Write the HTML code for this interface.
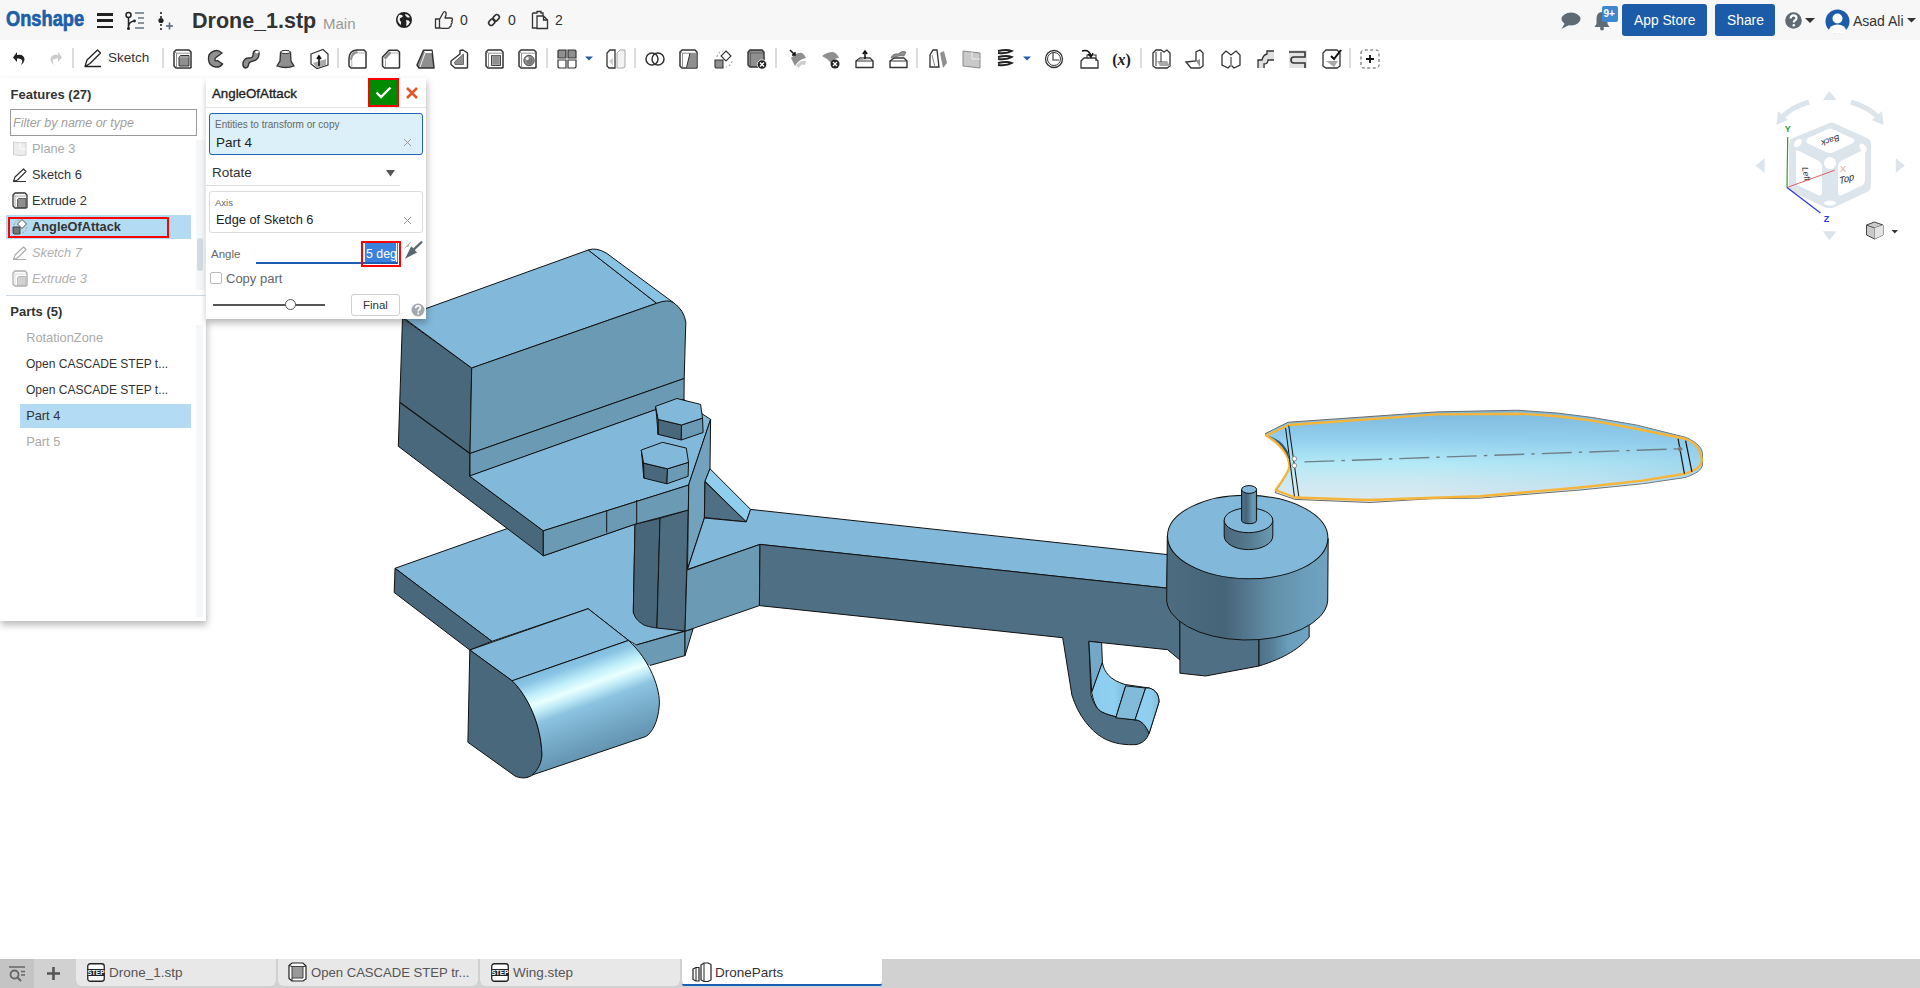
<!DOCTYPE html>
<html><head><meta charset="utf-8">
<style>
*{box-sizing:border-box;margin:0;padding:0}
html,body{width:1920px;height:988px;overflow:hidden;background:#fff;font-family:"Liberation Sans",sans-serif;color:#333}
.abs{position:absolute}
#top{position:absolute;left:0;top:0;width:1920px;height:40px;background:#f7f7f7}
#tb{position:absolute;left:0;top:40px;width:1920px;height:38px;background:#fff}
.t{position:absolute;white-space:nowrap;line-height:1}
.sep{position:absolute;top:48px;width:2px;height:20px;background:#dcdcdc}
#lp{position:absolute;left:0;top:78px;width:206px;height:543px;background:#fff;box-shadow:1px 4px 7px rgba(0,0,0,.28)}
#dlg{position:absolute;left:206px;top:78px;width:220px;height:241px;background:#fff;box-shadow:1px 4px 7px rgba(0,0,0,.28)}
#bot{position:absolute;left:0;top:959px;width:1920px;height:29px;background:#d1d1d1}
.tab{position:absolute;top:959px;height:27px;width:200px;background:#e8e8e8;border-radius:0 0 6px 6px}
.tabt{position:absolute;top:966px;font-size:13.5px;color:#555}
.fi{position:absolute;left:32px;font-size:12.8px;color:#333}
.pi{position:absolute;left:26px;font-size:12.8px;color:#333}
.gr{color:#aaa}
svg{overflow:visible}
</style></head><body>
<!-- 3D viewport -->
<svg id="model" class="abs" style="left:0;top:0" width="1920" height="988" viewBox="0 0 1920 988">
<defs>
<linearGradient id="gcyl" gradientUnits="userSpaceOnUse" x1="565" y1="655" x2="605" y2="765">
 <stop offset="0" stop-color="#78b3d7"/><stop offset="0.12" stop-color="#8bc5e5"/><stop offset="0.23" stop-color="#c2f0fb"/><stop offset="0.31" stop-color="#eaffff"/><stop offset="0.38" stop-color="#bfeaf7"/><stop offset="0.47" stop-color="#8cc3e0"/><stop offset="0.72" stop-color="#71a5c2"/><stop offset="1" stop-color="#5a88a4"/>
</linearGradient>
<linearGradient id="ghub" gradientUnits="userSpaceOnUse" x1="1166" y1="0" x2="1328" y2="0">
 <stop offset="0" stop-color="#4d6c80"/><stop offset="0.36" stop-color="#466478"/><stop offset="0.46" stop-color="#507288"/><stop offset="0.66" stop-color="#6390a9"/><stop offset="0.86" stop-color="#6a9eba"/><stop offset="1" stop-color="#70a3c0"/>
</linearGradient>
<linearGradient id="ghub2" gradientUnits="userSpaceOnUse" x1="1259" y1="0" x2="1309" y2="0">
 <stop offset="0" stop-color="#4f7187"/><stop offset="0.2" stop-color="#557b92"/><stop offset="0.6" stop-color="#6a9fbc"/><stop offset="1" stop-color="#6ea4c2"/>
</linearGradient>
<linearGradient id="gboss" gradientUnits="userSpaceOnUse" x1="1224" y1="0" x2="1273" y2="0">
 <stop offset="0" stop-color="#4a687b"/><stop offset="0.5" stop-color="#55798f"/><stop offset="1" stop-color="#6b9bb4"/>
</linearGradient>
<linearGradient id="gshaft" gradientUnits="userSpaceOnUse" x1="1241" y1="0" x2="1257" y2="0">
 <stop offset="0" stop-color="#4f7388"/><stop offset="0.35" stop-color="#466579"/><stop offset="0.75" stop-color="#6a9ab5"/><stop offset="1" stop-color="#5d8aa3"/>
</linearGradient>
<linearGradient id="ghook" gradientUnits="userSpaceOnUse" x1="1095" y1="0" x2="1127" y2="0">
 <stop offset="0" stop-color="#8ccdef"/><stop offset="0.6" stop-color="#8fcff0"/><stop offset="1" stop-color="#7db9da"/>
</linearGradient>
<linearGradient id="ghook2" gradientUnits="userSpaceOnUse" x1="1138" y1="0" x2="1160" y2="0">
 <stop offset="0" stop-color="#8fd0f1"/><stop offset="0.6" stop-color="#8ecdee"/><stop offset="1" stop-color="#7fbbdb"/>
</linearGradient>
<linearGradient id="gwing" gradientUnits="userSpaceOnUse" x1="0" y1="412" x2="0" y2="500">
 <stop offset="0" stop-color="#7fb8dc"/><stop offset="0.3" stop-color="#92cfee"/><stop offset="0.58" stop-color="#b3e9f6"/><stop offset="0.8" stop-color="#cde9f2"/><stop offset="1" stop-color="#dce8ee"/>
</linearGradient>
<linearGradient id="gwing2" gradientUnits="userSpaceOnUse" x1="1420" y1="0" x2="1700" y2="0">
 <stop offset="0" stop-color="#86c1e3" stop-opacity="0"/><stop offset="0.6" stop-color="#88c4e5" stop-opacity="0.2"/><stop offset="1" stop-color="#80bbe0" stop-opacity="0.4"/>
</linearGradient>
</defs>
<path d="M395,568.3 L520,524 L543.3,555.8 L635,524.2 L633.3,613.3 L685,630.8 L636.25,645 L628.5,640.4 L588.1,608.7 L491.9,641.3Z" fill="#82b9da" stroke="#111" stroke-width="1" stroke-linejoin="round"/>
<path d="M395,568.3 L491.9,641.3 L469.8,650 L394.2,592.5Z" fill="#4a687b" stroke="#111" stroke-width="1" stroke-linejoin="round"/>
<path d="M636.25,645 L685,631.25 L685,655.6 L650,665.4 L625,665 L625,642Z" fill="#6b9bb4" stroke="none"/>
<path d="M636.25,645 L685,631.25 L685,655.6 L650,665.4" fill="none" stroke="#111" stroke-width="1"/>
<path d="M685,631.25 L693.1,628.75 L685,655.6Z" fill="#6b9bb4" stroke="#111" stroke-width="1" stroke-linejoin="round"/>
<path d="M469.8,650 L588.1,608.7 L628.5,640.4 L512.1,680.8Z" fill="#82b9da" stroke="#111" stroke-width="1" stroke-linejoin="round"/>
<path d="M469.8,650 L512.1,680.8 C528,696 541,725 541.9,753.8 C542,768 534,777 524.6,777.9 C520,778 517,777 515,776 L467.9,742.3 Z" fill="#4a687b" stroke="#111" stroke-width="1" stroke-linejoin="round"/>
<path d="M512.1,680.8 L628.5,640.4 C650,660 661,690 659.2,706 C658,722 652,733 645.8,736.5 L532.3,775 C538,770 542,762 541.9,753.8 C541,725 528,696 512.1,680.8 Z" fill="url(#gcyl)" stroke="#111" stroke-width="1" stroke-linejoin="round"/>
<path d="M635,524.2 L660,518.3 L656.9,628 C650,627 646,626 644,625 C637,621 633.3,616 633.3,610 Z" fill="#48667a" stroke="#111" stroke-width="1" stroke-linejoin="round"/>
<path d="M660,518.3 L688.3,510 L685,631 L656.9,628Z" fill="#4d6c80" stroke="#111" stroke-width="1" stroke-linejoin="round"/>
<path d="M402.5,318 L471.7,368 L470,453.5 L469.5,476 L543.3,530.8 L543.3,555.8 L398.3,446.3Z" fill="#4a687b" stroke="#111" stroke-width="1" stroke-linejoin="round"/>
<path d="M400,402.5 L470,453.5" fill="none" stroke="#111" stroke-width="1.3"/>
<path d="M402.5,317 L588.3,250 L656.7,303.3 L471.7,368Z" fill="#82b9da" stroke="#111" stroke-width="1" stroke-linejoin="round"/>
<path d="M588.3,250 Q596,247 606.7,253.3 L673.3,302.5 L656.7,303.3 Z" fill="#89c3e3" stroke="#111" stroke-width="1" stroke-linejoin="round"/>
<path d="M471.7,368 L656.7,303.3 Q668,299 673.3,302.5 Q684,310 685.8,322 L684.2,378.5 L470,453.5 Z" fill="#6b9bb4" stroke="#111" stroke-width="1" stroke-linejoin="round"/>
<path d="M470,453.5 L684.2,378.5 L684,399.5 L470,476Z" fill="#6b9bb4" stroke="#111" stroke-width="1" stroke-linejoin="round"/>
<path d="M469.5,476 L684,399.5 L703,414.4 L710.6,419.4 L689.4,482.5 L688.75,485 L543.3,530.8Z" fill="#82b9da" stroke="#111" stroke-width="1" stroke-linejoin="round"/>
<path d="M543.3,530.8 L688.75,485 L688.3,510 L635,524.2 L543.3,555.8Z" fill="#6b9bb4" stroke="#111" stroke-width="1" stroke-linejoin="round"/>
<path d="M606.7,510 L606.7,532.5" fill="none" stroke="#111" stroke-width="1"/>
<path d="M636.7,500 L636.7,524" fill="none" stroke="#111" stroke-width="1"/>
<path d="M658.1,419.4 L681.5,425 L681.3,440 L658.1,434.4Z" fill="#4a687b" stroke="#111" stroke-width="1" stroke-linejoin="round"/>
<path d="M681.5,425 L702.5,418.1 L703.1,432.5 L681.3,440Z" fill="#6b9bb4" stroke="#111" stroke-width="1" stroke-linejoin="round"/>
<path d="M655.6,406.3 L658.1,419.4 L658.1,434.4 L656.6,416.3Z" fill="#6b9bb4" stroke="#111" stroke-width="1" stroke-linejoin="round"/>
<path d="M655.6,406.3 L676.9,398.5 L700.6,404.4 L702.5,418.1 L681.5,425 L658.1,419.4Z" fill="#82b9da" stroke="#111" stroke-width="1" stroke-linejoin="round"/>
<path d="M643.5,463.1 L667.5,468.8 L666.9,483.8 L643.8,478.1Z" fill="#4a687b" stroke="#111" stroke-width="1" stroke-linejoin="round"/>
<path d="M667.5,468.8 L688.5,462.3 L688.1,476.3 L666.9,483.8Z" fill="#6b9bb4" stroke="#111" stroke-width="1" stroke-linejoin="round"/>
<path d="M641.3,450 L643.5,463.1 L643.8,478.1 L642.3,460Z" fill="#6b9bb4" stroke="#111" stroke-width="1" stroke-linejoin="round"/>
<path d="M641.3,450 L662.5,442.3 L686.3,448.1 L688.5,462.3 L667.5,468.8 L643.5,463.1Z" fill="#82b9da" stroke="#111" stroke-width="1" stroke-linejoin="round"/>
<path d="M710.6,419.4 L710,468.75 L705,481.25 L704.4,518 L687.5,569 L688.75,485 L689.4,482.5Z" fill="#72a2bd" stroke="#111" stroke-width="1" stroke-linejoin="round"/>
<path d="M710,468.75 L750.6,509.4 L746.25,521.9 L705,481.25Z" fill="#90ceee" stroke="#111" stroke-width="1" stroke-linejoin="round"/>
<path d="M705,481.9 L746.25,521.9 L704.4,517.5Z" fill="#4e6f84" stroke="#111" stroke-width="1" stroke-linejoin="round"/>
<path d="M704.4,518 L746.25,521.9 L750.6,509.4 L1167.6,554.6 L1166.7,588.1 L760,544.4 L687.5,569.4Z" fill="#82b9da" stroke="#111" stroke-width="1" stroke-linejoin="round"/>
<path d="M686.9,570 L760,544.4 L759.4,605.6 L685,631.25Z" fill="#6b9bb4" stroke="#111" stroke-width="1" stroke-linejoin="round"/>
<path d="M759.4,605.6 L760,544.4 L1166.7,588.1 L1180,600 L1180,660 L1167.6,649.7 L1088.9,641.3 L1091,695.1 C1094,705 1098,710 1102,712 C1110,716 1125,719 1136.4,719.9 C1142,721 1146,726 1149.1,732 C1148,740 1140,745 1133.5,744.7 C1120,745 1110,742 1102.4,737.6 C1090,730 1078,715 1071.9,695.1 L1062.7,637.7 Z" fill="#4e6f84" stroke="#111" stroke-width="1" stroke-linejoin="round"/>
<path d="M1088.9,641.3 L1101.6,642.7 L1102.4,662.5 L1091.7,692.3Z" fill="#73a8c8" stroke="#111" stroke-width="1" stroke-linejoin="round"/>
<path d="M1102.4,662.5 C1104,672 1110,680 1125,684.5 L1149.1,688 C1156,690 1159,695 1159,702 L1149.1,733.4 C1146,726 1142,721 1136.4,719.9 C1125,719 1110,716 1102,712 C1098,710 1094,705 1091.7,692.3 Z" fill="url(#ghook)" stroke="#111" stroke-width="1" stroke-linejoin="round"/>
<path d="M1125.7,685.9 L1115.8,717.8" fill="none" stroke="#111" stroke-width="1"/>
<path d="M1145.6,688 L1135,719.9" fill="none" stroke="#111" stroke-width="1"/>
<path d="M1125.7,685.9 L1145.6,688 L1135,719.9 L1115.8,717.8 Z" fill="#82bad9" stroke="#111" stroke-width="1" stroke-linejoin="round"/>
<path d="M1145.6,688 L1149.1,688 C1156,690 1159,695 1159,702 L1149.1,733.4 C1146,726 1142,721 1136.4,719.9 L1135,719.9 Z" fill="url(#ghook2)" stroke="#111" stroke-width="1" stroke-linejoin="round"/>
<path d="M1179.9,600 L1179.9,673.2 L1205.7,676 L1259,666 L1259,600 Z" fill="#4e6f84" stroke="#111" stroke-width="1" stroke-linejoin="round"/>
<path d="M1259,600 L1259,666 C1285,658 1300,648 1309.2,637 L1309,600 Z" fill="url(#ghub2)" stroke="#111" stroke-width="1" stroke-linejoin="round"/>
<path d="M1167.3,536 L1166.7,597 A80.5,41 0 0 0 1327.7,601 L1328.2,538.5 Z" fill="url(#ghub)" stroke="#111" stroke-width="1" stroke-linejoin="round"/>
<ellipse cx="1247.7" cy="537" rx="80.2" ry="41.7" transform="rotate(0.9 1247.7 537)" fill="#82b9da" stroke="#111" stroke-width="1" stroke-linejoin="round"/>
<path d="M1224.2,520.3 L1224.2,536 A24.3,13.6 0 0 0 1272.8,536 L1272.8,520.3 Z" fill="url(#gboss)" stroke="#111" stroke-width="1" stroke-linejoin="round"/>
<ellipse cx="1248.5" cy="520.3" rx="24.3" ry="12.35" fill="#82b9da" stroke="#111" stroke-width="1" stroke-linejoin="round"/>
<path d="M1241.6,489.5 L1241.6,520.5 A7.5,3.2 0 0 0 1256.6,520.5 L1256.6,489.5 Z" fill="url(#gshaft)" stroke="#111" stroke-width="1" stroke-linejoin="round"/>
<ellipse cx="1249.1" cy="489.5" rx="7.5" ry="3.9" fill="#82b9da" stroke="#111" stroke-width="1" stroke-linejoin="round"/>
<path d="M1265,433.75 L1288.1,422.25 L1436.25,411.9 L1517.5,410.25 L1557.5,413.1 L1592.5,417.5 L1636.25,425 L1686.25,437.5 C1698,443 1702.5,448 1702.5,455 L1702.5,465 C1701,470 1698,473 1685,477.5 L1642.5,483.75 L1580,490 L1480,498.1 L1430,498.75 L1370,502.5 L1295,499.4 L1275,492.5 C1282,482 1289,472 1289.4,466 C1289,455 1282,444 1265,433.75 Z" fill="url(#gwing)" stroke="#6a6a6a" stroke-width="1" stroke-linejoin="round"/>
<path d="M1265,433.75 L1288.1,422.25 L1436.25,411.9 L1517.5,410.25 L1557.5,413.1 L1592.5,417.5 L1636.25,425 L1686.25,437.5 C1698,443 1702.5,448 1702.5,455 L1702.5,465 C1701,470 1698,473 1685,477.5 L1642.5,483.75 L1580,490 L1480,498.1 L1430,498.75 L1370,502.5 L1295,499.4 L1275,492.5 C1282,482 1289,472 1289.4,466 C1289,455 1282,444 1265,433.75 Z" fill="url(#gwing2)" stroke="none"/>
<path d="M1266,435.6 L1288.75,425 L1436,414.4 L1521,413.75 L1557.5,416.25 L1592.5,420.6 L1636,428.75 L1685,438.75 C1695,442 1700,448 1701.9,460 C1701,466 1699,469 1685,473.75 L1642.5,480.6 L1580,487.5 L1480,496.25 L1367.5,500 L1295,497.5 L1275.6,490 C1282,481 1289,472 1289.4,466.25 C1289,456 1283,446 1266,435.6 Z" fill="none" stroke="#f7b538" stroke-width="2.3" stroke-linejoin="round"/>
<path d="M1285.6,428.1 L1294.4,496.25" fill="none" stroke="#111" stroke-width="1"/>
<path d="M1288.75,425.6 L1298.75,496.25" fill="none" stroke="#111" stroke-width="1"/>
<path d="M1678.1,438.75 L1684.4,473.75" fill="none" stroke="#111" stroke-width="1.2"/>
<path d="M1685.6,440.6 L1691.9,471.9" fill="none" stroke="#111" stroke-width="1.2"/>
<path d="M1269,436 C1278,440 1286,450 1290,462 L1288,452 C1284,444 1278,439 1269,436Z" fill="#3a5566" stroke="none"/>
<path d="M1304.4,461.9 L1680,448.75" stroke="#6e7f88" stroke-width="1.4" stroke-dasharray="30 7 3.5 7" fill="none"/>
<circle cx="1294.4" cy="458.75" r="2.3" fill="#fff" stroke="#777" stroke-width="0.8"/>
<circle cx="1294.4" cy="465.6" r="2.3" fill="#fff" stroke="#777" stroke-width="0.8"/>
<path d="M1680,446 L1683,449 L1680,452 L1677,449Z" fill="#777"/>
</svg>

<div id="top">
  <div class="t" style="left:6px;top:8px;font-size:22px;font-weight:bold;color:#1d5fa8;-webkit-text-stroke:0.7px #1d5fa8;transform:scaleX(.83);transform-origin:0 0">Onshape</div>
  <!-- hamburger -->
  <div class="abs" style="left:97px;top:13px;width:16px;height:2.6px;background:#222"></div>
  <div class="abs" style="left:97px;top:19.4px;width:16px;height:2.6px;background:#222"></div>
  <div class="abs" style="left:97px;top:25.8px;width:16px;height:2.6px;background:#222"></div>
  <!-- branch icon -->
  <svg class="abs" style="left:124px;top:11px" width="22" height="20" viewBox="0 0 22 20">
    <circle cx="4.5" cy="4" r="2.5" fill="none" stroke="#222" stroke-width="1.5"/>
    <line x1="4.5" y1="6.5" x2="4.5" y2="18" stroke="#222" stroke-width="1.5"/>
    <circle cx="4.5" cy="17.5" r="1.5" fill="#222"/>
    <path d="M4.5 15 Q5 11 10 10" fill="none" stroke="#222" stroke-width="1.5"/>
    <circle cx="10.5" cy="10" r="1.4" fill="#222"/>
    <line x1="11" y1="2" x2="20" y2="2" stroke="#5a6a78" stroke-width="1.4"/>
    <line x1="14" y1="7" x2="20" y2="7" stroke="#5a6a78" stroke-width="1.4"/>
    <line x1="14" y1="12" x2="20" y2="12" stroke="#5a6a78" stroke-width="1.4"/>
    <line x1="11" y1="17" x2="20" y2="17" stroke="#5a6a78" stroke-width="1.4"/>
  </svg>
  <!-- insert icon -->
  <svg class="abs" style="left:156px;top:11px" width="20" height="20" viewBox="0 0 20 20">
    <line x1="5" y1="1" x2="5" y2="19" stroke="#222" stroke-width="1.6" stroke-dasharray="2 2"/>
    <circle cx="5" cy="9.5" r="2.6" fill="#222"/>
    <line x1="10" y1="15" x2="17" y2="15" stroke="#5a6a78" stroke-width="1.6"/>
    <line x1="13.5" y1="11.5" x2="13.5" y2="18.5" stroke="#5a6a78" stroke-width="1.6"/>
  </svg>
  <div class="t" style="left:192px;top:11px;font-size:21.5px;font-weight:bold;color:#333">Drone_1.stp</div>
  <div class="t" style="left:323px;top:16px;font-size:15px;color:#999">Main</div>
  <!-- globe -->
  <svg class="abs" style="left:395px;top:11px" width="18" height="18" viewBox="0 0 18 18">
    <circle cx="9" cy="9" r="8" fill="#222"/>
    <path d="M4 4 Q6 3 8 5 Q7 7 5 7 Q4 9 6 11 L6 14 Q3 12 2.5 9 Q2.5 6 4 4Z M10 3 Q13 3 15 6 Q13 7 12 6 Q10 5 10 3Z M11 9 Q14 9 15 11 Q14 14 11 15 Q12 12 11 9Z" fill="#f5f5f5"/>
  </svg>
  <!-- thumb -->
  <svg class="abs" style="left:434px;top:10px" width="20" height="20" viewBox="0 0 20 20">
    <path d="M1.5 9 H5.5 V18 H1.5Z M5.5 9.5 L9 3 Q10 1 11.5 2 Q12.5 3 12 5 L11 8 H17 Q18.5 8 18.5 9.5 Q18.5 10.5 17.5 11 Q18.5 11.5 18 13 Q17.5 13.8 17 14 Q17.5 15 17 16 Q16.5 17 15.5 17 Q15.5 18.3 14 18.3 H8 Q6.5 18.3 5.5 17.5" fill="none" stroke="#333" stroke-width="1.3" stroke-linejoin="round"/>
  </svg>
  <div class="t" style="left:460px;top:13px;font-size:14px;color:#333">0</div>
  <!-- link -->
  <svg class="abs" style="left:486px;top:12px" width="16" height="16" viewBox="0 0 16 16">
    <g transform="rotate(-45 8 8)" fill="none" stroke="#333" stroke-width="1.6">
      <rect x="1.5" y="5.5" width="7" height="5" rx="2.5"/>
      <rect x="7.5" y="5.5" width="7" height="5" rx="2.5"/>
    </g>
  </svg>
  <div class="t" style="left:508px;top:13px;font-size:14px;color:#333">0</div>
  <!-- docs -->
  <svg class="abs" style="left:531px;top:10px" width="18" height="20" viewBox="0 0 18 20">
    <path d="M1.5 3 H6 V1.5 H10 V3 H12 V6 M1.5 3 V18 H6" fill="none" stroke="#333" stroke-width="1.3"/>
    <path d="M6 6 H12.5 L16.5 10 V18.5 H6Z M12.5 6 V10 H16.5" fill="none" stroke="#333" stroke-width="1.3"/>
  </svg>
  <div class="t" style="left:555px;top:13px;font-size:14px;color:#333">2</div>

  <!-- right -->
  <svg class="abs" style="left:1560px;top:11px" width="22" height="20" viewBox="0 0 22 20">
    <ellipse cx="11" cy="8" rx="9.5" ry="6.5" fill="#5f6b74"/>
    <path d="M5 12 L1.5 18 L10 13.5Z" fill="#5f6b74"/>
  </svg>
  <svg class="abs" style="left:1593px;top:11px" width="18" height="20" viewBox="0 0 18 20">
    <path d="M9 1 Q14.5 1 14.5 8 V13 L16.5 16 H1.5 L3.5 13 V8 Q3.5 1 9 1Z" fill="#5f6b74"/>
    <circle cx="9" cy="17.5" r="2" fill="#5f6b74"/>
  </svg>
  <div class="abs" style="left:1602px;top:6px;width:16px;height:16px;background:#3f88cf;border-radius:2px"></div>
  <div class="t" style="left:1603.5px;top:9px;font-size:10px;font-weight:bold;color:#fff">9+</div>
  <div class="abs" style="left:1622px;top:4px;width:85px;height:31.5px;background:#1c5ba8;border-radius:3px"></div>
  <div class="t" style="left:1634px;top:13.5px;font-size:13.8px;color:#fff">App Store</div>
  <div class="abs" style="left:1715px;top:4px;width:60px;height:31.5px;background:#1c5ba8;border-radius:3px"></div>
  <div class="t" style="left:1727px;top:13.5px;font-size:13.8px;color:#fff">Share</div>
  <svg class="abs" style="left:1785px;top:12px" width="17" height="17" viewBox="0 0 17 17">
    <circle cx="8.5" cy="8.5" r="8.3" fill="#5f6b74"/>
    <path d="M5.6 6.4 Q5.6 3.4 8.6 3.4 Q11.5 3.4 11.5 6 Q11.5 7.6 9.8 8.5 Q8.8 9.1 8.8 10.5" fill="none" stroke="#fff" stroke-width="2.1"/>
    <circle cx="8.8" cy="13.3" r="1.3" fill="#fff"/>
  </svg>
  <svg class="abs" style="left:1805px;top:18px" width="10" height="6" viewBox="0 0 10 6"><path d="M0 0H10L5 5Z" fill="#333"/></svg>
  <svg class="abs" style="left:1825px;top:9px" width="25" height="25" viewBox="0 0 25 25">
    <circle cx="12.5" cy="12.5" r="12" fill="#1c5ba8"/>
    <circle cx="12.5" cy="9.5" r="5" fill="#fff"/>
    <path d="M3.5 22 Q5 15.5 12.5 15.5 Q20 15.5 21.5 22 Q17.5 25 12.5 25 Q7.5 25 3.5 22Z" fill="#fff"/>
  </svg>
  <div class="t" style="left:1853px;top:14px;font-size:14px;color:#333">Asad Ali</div>
  <svg class="abs" style="left:1907px;top:18px" width="9" height="6" viewBox="0 0 9 6"><path d="M0 0H9L4.5 4.5Z" fill="#333"/></svg>
</div>

<div id="tb"></div>
<!-- toolbar -->
<svg class="abs" style="left:0;top:40px" width="1920" height="38" viewBox="0 40 1920 38" id="toolbar">
  <defs>
    <g id="box"><path d="M0.8 3 L3 0.8 H16 L18.2 3 V17 L16 19.2 H3 L0.8 17Z" fill="#fff" stroke="#333" stroke-width="1.3"/></g>
  </defs>
  <!-- undo -->
  <path d="M21 65 Q27 60 23 56 Q21 54 17 55 V52 L13 57.5 L17 62 V58.5 Q21 58 22 60 Q23 62 21 65Z" fill="#222"/>
  <path d="M54 65 Q48 60 52 56 Q54 54 58 55 V52 L62 57.5 L58 62 V58.5 Q54 58 53 60 Q52 62 54 65Z" fill="#ccc"/>
  <rect x="72" y="48" width="2" height="20" fill="#dcdcdc"/>
  <!-- pencil -->
  <path d="M85 66.5 L87 60 L97.5 50 L100.5 53 L90 63.5 Z M85 66.5 H101" fill="none" stroke="#222" stroke-width="1.3" stroke-linejoin="round"/>
  <!-- ICONS -->
<g transform="translate(173 49)"><path d="M1 3 L3 1 H16 L18 3 V18.5 L17 19 H3 L1 17Z" fill="#fff" stroke="#333" stroke-width="1.5" stroke-linejoin="round"/><path d="M1.5 3 L3.5 4.2 H17.5 M3.5 4.2 V18.5" fill="none" stroke="#777" stroke-width="0.8"/><path d="M6 8 L7.5 6.5 H16 V17 H6Z" fill="#8f8f8f" stroke="#333" stroke-width="1"/><path d="M6 8 H16" stroke="#bbb" stroke-width="0.8"/></g>
<g transform="translate(207 49)"><path d="M15 4 Q11 0.5 7 2 Q1 4 1.5 10.5 Q2 17 8.5 18 Q13 18.5 15.5 15 L10.5 11.5 Q9 12.5 8 11 Q7.5 9.5 9 8.5 L15 4Z" fill="#8f8f8f" stroke="#333" stroke-width="1.4"/></g>
<g transform="translate(241 49)"><path d="M2 14 Q3 9 8 9 Q12 9 12 6 Q12 2 15 1.5 Q18.5 1.5 18 5.5 Q17.5 11 12 12 Q7.5 13 7.5 16 Q7 19 4.5 19 Q1.5 18.5 2 14Z" fill="#8f8f8f" stroke="#333" stroke-width="1.4"/><ellipse cx="16" cy="3" rx="1.8" ry="1.2" fill="#fff"/></g>
<g transform="translate(276 49)"><path d="M4.5 3.5 Q9.5 0 14.5 3.5 L15 12 L18 17 Q10 20 1 17 L4 12Z" fill="#8f8f8f" stroke="#333" stroke-width="1.3"/><ellipse cx="9.5" cy="3" rx="4.8" ry="1.6" fill="#fff" stroke="#333" stroke-width="1"/></g>
<g transform="translate(310 49)"><path d="M1 5 L13 0.5 L18 5 V16 L7 19.5 L1 15Z" fill="#fff" stroke="#333" stroke-width="1.2"/><path d="M3 14 L16 10 V16 L7 19Z" fill="#aaa"/><path d="M9 17 V8 M7 10 L9 7 L11 10" stroke="#111" stroke-width="1.6" fill="none"/></g>
<g transform="translate(348 49)"><path d="M1 17 V10 Q1 1.5 9 1 H16 L18 3 V18.5 L17 19 H3 L1 17Z" fill="#fff" stroke="#333" stroke-width="1.5" stroke-linejoin="round"/><path d="M2 10.5 Q2.5 2.5 9 2 L10.5 4 Q4.5 4.5 3.8 11.5Z" fill="#8f8f8f"/><path d="M3.8 11.5 V18.5 M10.5 4 H17.5" stroke="#999" stroke-width="0.8" fill="none"/></g>
<g transform="translate(381.5 49)"><path d="M1 8 L7.5 1.2 H16 L18 3 V18.5 L17 19 H3 L1 17Z" fill="#fff" stroke="#333" stroke-width="1.5" stroke-linejoin="round"/><path d="M2 8.5 L8 2.2 L10.2 4 L4 10.5Z" fill="#8f8f8f"/><path d="M4 10.5 V18.5 M10.2 4 H17.5" stroke="#999" stroke-width="0.8" fill="none"/></g>
<g transform="translate(416 49)"><path d="M1 16 L7.5 1.2 H16 L18 19 H3 Z" fill="#8f8f8f" stroke="#333" stroke-width="1.5" stroke-linejoin="round"/><path d="M8 2 H15.5 L15.8 4 H9Z" fill="#fff"/><path d="M4 18 L9 4" stroke="#fff" stroke-width="0.9"/></g>
<g transform="translate(450 49)"><path d="M1 12 L10 5 V1.5 L13 1 L17.5 4 V18.5 L17 19 H5 L1 15.5Z" fill="#fff" stroke="#333" stroke-width="1.4" stroke-linejoin="round"/><path d="M4.5 13 L13.5 5 V15.5 H5Z" fill="#8f8f8f" stroke="#555" stroke-width="0.8"/></g>
<g transform="translate(485 49)"><path d="M1 3 L3 1 H16 L18 3 V18.5 L17 19 H3 L1 17Z" fill="#fff" stroke="#333" stroke-width="1.5" stroke-linejoin="round"/><path d="M1.5 3 L3.5 4.2 H17.5 M3.5 4.2 V18.5" fill="none" stroke="#777" stroke-width="0.8"/><path d="M6.5 6.5 H15.5 V16.5 H6.5Z" fill="#bbb" stroke="#333" stroke-width="0.9"/><path d="M7.5 6.5 V15.5 H14.5 V6.5Z" fill="#8f8f8f"/></g>
<g transform="translate(518 49)"><path d="M1 3 L3 1 H16 L18 3 V18.5 L17 19 H3 L1 17Z" fill="#fff" stroke="#333" stroke-width="1.5" stroke-linejoin="round"/><path d="M1.5 3 L3.5 4.2 H17.5 M3.5 4.2 V18.5" fill="none" stroke="#777" stroke-width="0.8"/><circle cx="11" cy="11.5" r="5.2" fill="#8f8f8f" stroke="#444" stroke-width="0.9"/><circle cx="11.5" cy="12" r="3" fill="#777"/><circle cx="9.3" cy="9.6" r="1.6" fill="#eee"/></g>
<g transform="translate(557 49)"><path d="M1 2 L2 1 H9 V9 H1Z M11 1 H18 L19 2 V9 H11Z" fill="#8f8f8f" stroke="#333" stroke-width="1.2"/><path d="M1 11 H9 V19 H2 L1 18Z M11 11 H19 V18 L18 19 H11Z" fill="#fff" stroke="#333" stroke-width="1.2"/></g>
<g transform="translate(606 49)"><path d="M1 4 L4 1 H9 V19 H3 L1 17Z" fill="#fff" stroke="#333" stroke-width="1.3"/><path d="M11 4 L14 1 H19 V18 L17 19 H11Z" fill="#f2f2f2" stroke="#aaa" stroke-width="1"/><path d="M3 12 L7 9 V17Z" fill="#ccc"/></g>
<g transform="translate(645 49)"><circle cx="7" cy="10" r="6" fill="none" stroke="#333" stroke-width="1.5"/><circle cx="13" cy="10" r="6" fill="none" stroke="#333" stroke-width="1.5"/></g>
<g transform="translate(679 49)"><path d="M1 3 L3 1 H16 L18 3 V18.5 L17 19 H3 L1 17Z" fill="#fff" stroke="#333" stroke-width="1.5" stroke-linejoin="round"/><path d="M1.5 3 L3.5 4.2 H17.5 M3.5 4.2 V18.5" fill="none" stroke="#777" stroke-width="0.8"/><path d="M11 4.2 H17.5 V18.5 H7.5Z" fill="#8f8f8f"/><path d="M11 4.2 L7.5 18.5" stroke="#333" stroke-width="1"/></g>
<g transform="translate(714 49)"><path d="M1 11 H9 V19 H2 L1 18Z" fill="#8f8f8f" stroke="#333" stroke-width="1.1"/><path d="M12 2 L17 7 L12 12 L7 7Z" fill="#fff" stroke="#333" stroke-width="1.1"/><path d="M3 8 Q4 3 9 2 M18 12 Q17 17 12 18" fill="none" stroke="#aaa" stroke-width="1.2" stroke-dasharray="2 2"/></g>
<g transform="translate(747 49)"><path d="M1 3 L3 1 H15 L17 3 V17 L15 18 H3 L1 16Z" fill="#8f8f8f" stroke="#333" stroke-width="1.4"/><path d="M1.5 3 L3.5 4 H16.5 M3.5 4 V17.5" stroke="#555" stroke-width="0.8" fill="none"/><circle cx="15" cy="15.5" r="4.7" fill="#222" stroke="#fff" stroke-width="0.8"/><path d="M13 13.5 L17 17.5 M17 13.5 L13 17.5" stroke="#fff" stroke-width="1.4"/></g>
<g transform="translate(787 49)"><path d="M4 9 Q10 3 15 4 Q18 6 19 9 Q12 10 8 17Z" fill="#8f8f8f"/><path d="M9 17 Q13 11 19 12 L18 16 Q14 14 12 19Z" fill="#ccc"/><path d="M3 1 L8 6 M8 3 V6 H5" stroke="#111" stroke-width="1.5" fill="none"/></g>
<g transform="translate(821 49)"><path d="M1 7 Q6 3 12 3 Q16 4 18 9 Q13 9 10 14 Q6 9 1 7Z" fill="#8f8f8f"/><circle cx="14" cy="15" r="4.5" fill="#222"/><path d="M12 13 L16 17 M16 13 L12 17" stroke="#fff" stroke-width="1.3"/></g>
<g transform="translate(855 49)"><path d="M1 12 L5 9 H15 L18 12 V18.5 H1Z" fill="#fff" stroke="#333" stroke-width="1.4" stroke-linejoin="round"/><path d="M1 12 H18" stroke="#333" stroke-width="1"/><path d="M3 11 Q6 7 10 9 L16 10Z" fill="#8f8f8f"/><path d="M10 10 V2.5 M7.8 5 L10 2 L12.2 5" stroke="#111" stroke-width="1.5" fill="none"/></g>
<g transform="translate(889 49)"><path d="M1 12 L5 9 H15 L18 12 V18.5 H1Z" fill="#fff" stroke="#333" stroke-width="1.4" stroke-linejoin="round"/><path d="M1 12 H18" stroke="#333" stroke-width="1"/><path d="M2 9 Q4 4 9 5 Q13 1 17 3 L15 7 Q11 6 7 8Z" fill="#8f8f8f" stroke="#555" stroke-width="0.6"/></g>
<g transform="translate(928 49)"><path d="M2 18 V6 L5 1 H9 L11 18Z" fill="#fff" stroke="#333" stroke-width="1.3"/><path d="M4 6 L7 18" stroke="#888" fill="none"/><path d="M12 4 L16 2 L19 14 L15 19Z" fill="#8f8f8f"/></g>
<g transform="translate(962 49)"><path d="M1 2 L18 4 V19 L1 17Z" fill="#c9c9c9" stroke="#888" stroke-width="1"/><path d="M10 3 V10 H18" stroke="#eee" fill="none"/></g>
<g transform="translate(995 49)"><path d="M3 2 Q12 0 17 2 Q12 5 3 4 M3 8 Q12 6 17 8 Q12 11 3 10 M3 14 Q12 12 17 14 Q12 17 3 16" stroke="#222" stroke-width="1.8" fill="none"/></g>
<g transform="translate(1044 49)"><circle cx="10" cy="10" r="8.5" fill="none" stroke="#333" stroke-width="1.3"/><circle cx="10" cy="10" r="6.5" fill="none" stroke="#333" stroke-width="1"/><path d="M9 4 V11 H15" stroke="#333" stroke-width="1.1" fill="none"/></g>
<g transform="translate(1080 49)"><path d="M1 12 L4 9 H15 L18 12 V19 H1Z" fill="#fff" stroke="#333" stroke-width="1.3"/><path d="M7 9 V6 H16 V12" fill="none" stroke="#333" stroke-width="1.1"/><path d="M2 2 Q9 0 11 7 M8 5 L11 8 L13 4" stroke="#111" stroke-width="1.4" fill="none"/></g>
<g transform="translate(1111 49)"><text x="10.5" y="15.5" font-size="16" font-family="Liberation Serif" fill="#222" text-anchor="middle" style="font-weight:bold">(<tspan style="font-style:italic">x</tspan>)</text></g>
<g transform="translate(1152 49)"><path d="M1 4 L4 1 H9 L12 3 L15 1 L18 4 V17 L15 19 H4 L1 17Z" fill="#fff" stroke="#333" stroke-width="1.3"/><path d="M5 12 H15 L18 17 H8Z" fill="#aaa"/><path d="M4 3 V17 M9 3 V13" stroke="#333" stroke-width="1"/></g>
<g transform="translate(1185 49)"><path d="M1 13 L11 12 V3 L15 1 L18 4 V17 L15 19 L6 19Z" fill="#fff" stroke="#333" stroke-width="1.3"/><path d="M11 12 L15 10 V18Z" fill="#8f8f8f"/></g>
<g transform="translate(1221 49)"><path d="M1 6 L5 2 L10 6 L15 2 L19 6 V16 L13 19 L10 16 L7 19 L1 16Z" fill="#fff" stroke="#333" stroke-width="1.3"/><path d="M9 8 L11 8 V18 L9 18Z" fill="#8f8f8f"/></g>
<g transform="translate(1255 49)"><path d="M3 10 H7 Q8 6 11 6 V2 H19 V11 H13 Q13 14 10 15 V19 H3" fill="#e0e0e0"/><path d="M3 19 V11 H7 Q8 6 12 5 V2 H19 M19 11 H13 Q13 15 9 15 V19" fill="none" stroke="#333" stroke-width="1.3"/></g>
<g transform="translate(1288 49)"><rect x="1" y="1" width="18" height="18" fill="#e3e3e3"/><path d="M1 3 H17 V8 H6 Q3 8 3 11 Q3 14 6 14 H17 V19" fill="none" stroke="#333" stroke-width="1.6"/></g>
<g transform="translate(1322 49)"><path d="M1 4 L4 1 H15 L18 4 V17 L15 19 H4 L1 17Z" fill="#fff" stroke="#333" stroke-width="1.3"/><path d="M4 12 L12 18 L16 12Z" fill="#aaa"/><path d="M9 7 L12 10 L19 1" stroke="#111" stroke-width="2" fill="none"/></g>
<g transform="translate(1360 49)"><path d="M1 4 Q1 1 4 1 H16 Q19 1 19 4 V16 Q19 19 16 19 H4 Q1 19 1 16Z" fill="none" stroke="#555" stroke-width="1" stroke-dasharray="3 2.5"/><path d="M10 6 V14 M6 10 H14" stroke="#111" stroke-width="1.8"/></g>
<path d="M585 56.5 H593 L589 60.5Z" fill="#1d5eb0"/>
<path d="M1023 56.5 H1031 L1027 60.5Z" fill="#1d5eb0"/>
<!-- /ICONS -->
<rect x="162" y="48" width="2" height="20" fill="#dcdcdc"/>
  <rect x="337" y="48" width="2" height="20" fill="#dcdcdc"/>
  <rect x="546" y="48" width="2" height="20" fill="#dcdcdc"/>
  <rect x="634" y="48" width="2" height="20" fill="#dcdcdc"/>
  <rect x="775" y="48" width="2" height="20" fill="#dcdcdc"/>
  <rect x="916" y="48" width="2" height="20" fill="#dcdcdc"/>
  <rect x="1140" y="48" width="2" height="20" fill="#dcdcdc"/>
  <rect x="1349" y="48" width="2" height="20" fill="#dcdcdc"/>
</svg>
<div class="t" style="left:108px;top:51px;font-size:13.5px;color:#333">Sketch</div>

<svg class="abs" style="left:1740px;top:80px" width="180" height="180" viewBox="0 0 180 180">
<g fill="#dde5ec">
<path d="M89.3 10.9 L82.9 20 H96.6Z"/>
<path d="M89.3 160.3 L82.9 151.2 H96.6Z"/>
<path d="M15.5 85.6 L24.6 78.3 V92.9Z"/>
<path d="M164.9 85.6 L155.8 78.3 V92.9Z"/>
</g>
<path d="M69 22 Q52 27 42 37" fill="none" stroke="#dde5ec" stroke-width="5"/>
<path d="M36.5 45 L38 31 L48 40Z" fill="#dde5ec"/>
<path d="M111 22 Q128 27 138 37" fill="none" stroke="#dde5ec" stroke-width="5"/>
<path d="M143.5 45 L142 31 L132 40Z" fill="#dde5ec"/>
<!-- cube frame -->
<path d="M89.5 43 Q92 42 95 43.5 L127 58 Q131 60 131 64 V106 Q131 110 127 112 L95 127 Q89.5 129.5 84 127 L53 112 Q49 110 49 106 V64 Q49 60 53 58Z" fill="#dde5ec"/>
<!-- faces white -->
<path d="M68 58 L88 49 Q90 48 92 49 L114 59 Q115 61 113 63 L94 72 Q90 74 86 72 L67 63 Q65 61 68 58Z" fill="#fff"/>
<path d="M56 73 Q55 69 59 71 L79 81 Q82 83 82 87 V112 Q82 117 78 115 L59 106 Q56 104 56 100Z" fill="#fff"/>
<path d="M98 87 Q98 83 101 81 L121 71 Q125 69 125 73 V100 Q125 104 121 106 L102 115 Q98 117 98 112Z" fill="#fff"/>
<ellipse cx="90" cy="83" rx="6" ry="6" fill="#fff"/>
<ellipse cx="58" cy="63" rx="3" ry="5" transform="rotate(40 58 63)" fill="#fff"/>
<ellipse cx="123" cy="68" rx="3" ry="5" transform="rotate(-30 123 68)" fill="#fff"/>
<ellipse cx="90" cy="123" rx="6" ry="2.5" fill="#fff"/>
<text x="0" y="3" font-size="8.5" fill="#333" font-family="Liberation Sans" transform="translate(90.4 60.6) rotate(162)" text-anchor="middle" style="font-style:italic">Back</text>
<text x="0" y="3" font-size="8.5" fill="#333" font-family="Liberation Sans" transform="translate(66.3 93.9) rotate(80)" text-anchor="middle" style="font-style:italic">Left</text>
<text x="0" y="3" font-size="9.5" fill="#222" font-family="Liberation Sans" transform="translate(106.7 98.8) rotate(-17) skewX(-12)" text-anchor="middle" style="font-style:italic">Top</text>
<!-- axes -->
<line x1="47" y1="107.5" x2="47.7" y2="57" stroke="#2ea02e" stroke-width="1.2"/>
<text x="47.7" y="52" font-size="9" fill="#2ea02e" font-family="Liberation Sans" font-weight="bold" text-anchor="middle">Y</text>
<line x1="47" y1="107.5" x2="94.7" y2="90.2" stroke="#e23b3b" stroke-width="1" opacity="0.8"/>
<text x="103" y="92" font-size="9" fill="#f0a0a0" font-family="Liberation Sans" text-anchor="middle">X</text>
<line x1="47" y1="107.5" x2="80.5" y2="133" stroke="#2838e0" stroke-width="1.2"/>
<text x="86.5" y="142" font-size="9" fill="#2838e0" font-family="Liberation Sans" font-weight="bold" text-anchor="middle">Z</text>
<!-- view icon -->
<path d="M126.5 145 L134.5 142 L143 145 V155 L134.5 159 L126.5 155Z" fill="#c9c9c9" stroke="#333" stroke-width="0.9"/>
<path d="M126.5 145 L134.5 148 L143 145 M134.5 148 V159" fill="none" stroke="#333" stroke-width="0.8"/>
<path d="M134.5 148 L143 145 V155 L134.5 159Z" fill="#e3e3e3"/>
<path d="M151.5 150 H158 L154.75 153.5Z" fill="#333"/>
</svg>
<div id="lp"></div>
<div class="abs" style="left:196px;top:140px;width:9px;height:150px;background:#f6f7f9"></div>
<div class="abs" style="left:196.5px;top:238px;width:6px;height:33px;background:#d3dbe3;border-radius:3px"></div>
<div class="abs" style="left:196px;top:325px;width:7px;height:291.5px;background:#f6f7f9"></div>
<div class="t" style="left:10.5px;top:88.2px;font-size:13px;font-weight:bold;color:#333">Features (27)</div>
<div class="abs" style="left:10px;top:109px;width:187px;height:27px;border:1px solid #9a9a9a;background:#fff"></div>
<div class="t" style="left:13px;top:117.4px;font-size:12.5px;font-style:italic;color:#a0a0a0">Filter by name or type</div>
<div class="abs" style="left:6px;top:215px;width:185px;height:24px;background:#b3dbf3"></div>
<div class="abs" style="left:8px;top:217px;width:161px;height:21px;border:2px solid #f00"></div>
<div class="t" style="left:32px;top:143.0px;font-size:12.8px;color:#aaa">Plane 3</div>
<div class="t" style="left:32px;top:169.0px;font-size:12.8px;color:#333">Sketch 6</div>
<div class="t" style="left:32px;top:195.0px;font-size:12.8px;color:#333">Extrude 2</div>
<div class="t" style="left:32px;top:221.0px;font-size:12.8px;color:#333;font-weight:bold">AngleOfAttack</div>
<div class="t" style="left:32px;top:247.0px;font-size:12.8px;color:#b0b0b0;font-style:italic">Sketch 7</div>
<div class="t" style="left:32px;top:273.0px;font-size:12.8px;color:#b0b0b0;font-style:italic">Extrude 3</div>
<div class="abs" style="left:6px;top:295px;width:199px;height:1px;background:#cdd8e2"></div>
<div class="t" style="left:10.3px;top:305.0px;font-size:13px;font-weight:bold;color:#333">Parts (5)</div>
<div class="abs" style="left:20px;top:404px;width:171px;height:24px;background:#b3dbf3"></div>
<div class="t" style="left:26.2px;top:331.5px;font-size:12.8px;color:#aaa">RotationZone</div>
<div class="t" style="left:26.2px;top:357.5px;font-size:12.8px;color:#333;transform:scaleX(.94);transform-origin:0 0">Open CASCADE STEP t...</div>
<div class="t" style="left:26.2px;top:383.5px;font-size:12.8px;color:#333;transform:scaleX(.94);transform-origin:0 0">Open CASCADE STEP t...</div>
<div class="t" style="left:26.2px;top:409.5px;font-size:12.8px;color:#333">Part 4</div>
<div class="t" style="left:26.2px;top:435.5px;font-size:12.8px;color:#aaa">Part 5</div>
<svg class="abs" style="left:12px;top:140px" width="16" height="150" viewBox="0 0 16 150">
<!-- plane -->
<g opacity="0.35"><path d="M1.5 2 L8 3 L14 2.5 V15 L8 15.5 L1.5 14.5Z" fill="#ccc" stroke="#777" stroke-width="1"/><path d="M8 3 V9 H14" stroke="#fff" fill="none"/></g>
<!-- sketch 6 pencil -->
<g transform="translate(0 26)"><path d="M1.5 15.5 L3 11 L11.5 3 L14 5.5 L5.5 14 Z M1.5 15.5 H14" fill="none" stroke="#333" stroke-width="1.2" stroke-linejoin="round"/></g>
<!-- extrude -->
<g transform="translate(0 52)"><path d="M1 3 L3 1 H13 L15 3 V15.5 L14 16 H3 L1 14Z" fill="#fff" stroke="#333" stroke-width="1.3" stroke-linejoin="round"/><path d="M1.5 3 L3 4 H14.5 M3 4 V15.5" fill="none" stroke="#888" stroke-width="0.7"/><path d="M5.5 7.5 L6.5 6.5 H14 V15.5 H5.5Z" fill="#8f8f8f" stroke="#444" stroke-width="0.8"/></g>
<!-- transform -->
<g transform="translate(0 78)"><path d="M1 9 H8 V16 H2 L1 15Z" fill="#777" stroke="#444" stroke-width="1"/><path d="M10 1.5 L14.5 6 L10 10.5 L5.5 6Z" fill="#fff" stroke="#555" stroke-width="1"/><path d="M2 7 Q3 3 7 2 M15 9 Q14 14 10 15" stroke="#999" stroke-width="1" fill="none" stroke-dasharray="1.5 1.5"/></g>
<!-- sketch 7 -->
<g transform="translate(0 104)" opacity="0.4"><path d="M1.5 15.5 L3 11 L11.5 3 L14 5.5 L5.5 14 Z M1.5 15.5 H14" fill="none" stroke="#333" stroke-width="1.2" stroke-linejoin="round"/></g>
<!-- extrude 3 -->
<g transform="translate(0 130)" opacity="0.4"><path d="M1 3 L3 1 H13 L15 3 V15.5 L14 16 H3 L1 14Z" fill="#fff" stroke="#333" stroke-width="1.3" stroke-linejoin="round"/><path d="M1.5 3 L3 4 H14.5 M3 4 V15.5" fill="none" stroke="#888" stroke-width="0.7"/><path d="M5.5 7.5 L6.5 6.5 H14 V15.5 H5.5Z" fill="#8f8f8f" stroke="#444" stroke-width="0.8"/></g>
</svg>
<div id="dlg"></div>
<div class="abs" style="left:206px;top:107px;width:220px;height:1px;background:#e3e3e3"></div>
<div class="t" style="left:212px;top:86.6px;font-size:13.3px;color:#222;-webkit-text-stroke:0.35px #222">AngleOfAttack</div>
<div class="abs" style="left:368px;top:78px;width:31px;height:29px;background:#008a00;border:2px solid #f00"></div>
<svg class="abs" style="left:375px;top:86px" width="17" height="13" viewBox="0 0 17 13"><path d="M1.5 6.5 L6 11 L15.5 1.5" fill="none" stroke="#fff" stroke-width="2.4"/></svg>
<svg class="abs" style="left:405px;top:86px" width="14" height="14" viewBox="0 0 14 14"><path d="M2 2 L12 12 M12 2 L2 12" fill="none" stroke="#e0572b" stroke-width="2.6"/></svg>
<div class="abs" style="left:209px;top:113px;width:214px;height:42px;background:#dcf0fa;border:1.5px solid #1e63b5;border-radius:3px"></div>
<div class="t" style="left:215px;top:120.3px;font-size:10px;color:#666">Entities to transform or copy</div>
<div class="t" style="left:216px;top:136.4px;font-size:13.5px;color:#222">Part 4</div>
<svg class="abs" style="left:403px;top:138px" width="9" height="9" viewBox="0 0 9 9"><path d="M1 1 L8 8 M8 1 L1 8" stroke="#999" stroke-width="1"/></svg>
<div class="t" style="left:212px;top:166.4px;font-size:13.5px;color:#333">Rotate</div>
<svg class="abs" style="left:386px;top:170px" width="9" height="7" viewBox="0 0 9 7"><path d="M0 0H9L4.5 6.5Z" fill="#555"/></svg>
<div class="abs" style="left:206px;top:185px;width:194px;height:1px;background:#ddd"></div>
<div class="abs" style="left:209px;top:191px;width:214px;height:41.5px;background:#fff;border:1px solid #dcdcdc;border-radius:3px"></div>
<div class="t" style="left:215px;top:198.4px;font-size:9.5px;color:#666">Axis</div>
<div class="t" style="left:216px;top:214.1px;font-size:12.8px;color:#222">Edge of Sketch 6</div>
<svg class="abs" style="left:403px;top:216px" width="9" height="9" viewBox="0 0 9 9"><path d="M1 1 L8 8 M8 1 L1 8" stroke="#999" stroke-width="1"/></svg>
<div class="t" style="left:211px;top:248.9px;font-size:11.5px;color:#666">Angle</div>
<div class="abs" style="left:256px;top:262px;width:142px;height:2px;background:#1d5eb0"></div>
<div class="abs" style="left:365px;top:243px;width:33px;height:19px;background:#3a82dd"></div>
<div class="t" style="left:365.5px;top:246.5px;font-size:13.3px;color:#fff;transform:scaleX(.93);transform-origin:0 0">5 deg</div>
<div class="abs" style="left:396px;top:243px;width:1px;height:19px;background:#fff"></div>
<div class="abs" style="left:361px;top:241px;width:40px;height:26px;border:2px solid #f00"></div>
<svg class="abs" style="left:403px;top:240px" width="20" height="20" viewBox="0 0 20 20"><path d="M18.4 2.25 L10.6 9.7" stroke="#5a6670" stroke-width="2.3" stroke-linecap="round"/><path d="M2 18.7 L8.25 6.2 L14.1 12.4Z" fill="#5a6670"/><path d="M1.5 8.3 L7.5 2.5" stroke="#a9b1b7" stroke-width="1"/><path d="M3.5 6.5 L5 4.5 L6.5 5 L5 7Z" fill="#a9b1b7"/></svg>
<div class="abs" style="left:210px;top:272px;width:12px;height:12px;border:1px solid #bbb;border-radius:2px;background:#fff"></div>
<div class="t" style="left:226px;top:271.5px;font-size:13px;color:#666">Copy part</div>
<div class="abs" style="left:213px;top:304px;width:112px;height:1.6px;background:#555"></div>
<div class="abs" style="left:284.5px;top:299px;width:11px;height:11px;border:1.2px solid #555;border-radius:50%;background:#fff"></div>
<div class="abs" style="left:351px;top:294px;width:49px;height:22px;border:1px solid #d0d0d0;border-radius:3px;background:#fff"></div>
<div class="t" style="left:363px;top:299.6px;font-size:11.5px;color:#333">Final</div>
<svg class="abs" style="left:411px;top:303px" width="14" height="14" viewBox="0 0 14 14"><circle cx="7" cy="7" r="6.5" fill="#a3a9ae"/><path d="M4.7 5.3 Q4.7 2.8 7 2.8 Q9.3 2.8 9.3 5 Q9.3 6.2 8 6.9 Q7.2 7.4 7.2 8.5" fill="none" stroke="#fff" stroke-width="1.6"/><circle cx="7.2" cy="10.6" r="1" fill="#fff"/></svg>


<div id="bot"></div>
<div class="abs" style="left:0;top:959px;width:34px;height:29px;background:#c4c4c4"></div>
<svg class="abs" style="left:8px;top:965px" width="19" height="18" viewBox="0 0 19 18">
<line x1="1" y1="2" x2="17" y2="2" stroke="#666" stroke-width="1.5"/>
<circle cx="6.5" cy="9.5" r="4" fill="none" stroke="#666" stroke-width="1.8"/>
<line x1="9.5" y1="12.5" x2="13" y2="16" stroke="#666" stroke-width="2"/>
<line x1="13" y1="6.5" x2="17" y2="6.5" stroke="#666" stroke-width="1.5"/>
<line x1="13" y1="10" x2="17" y2="10" stroke="#666" stroke-width="1.5"/>
</svg>
<svg class="abs" style="left:46px;top:966px" width="15" height="15" viewBox="0 0 15 15"><path d="M7.5 1 V14 M1 7.5 H14" stroke="#555" stroke-width="2.6"/></svg>
<div class="tab" style="left:76px;background:#e8e8e8"></div>
<div class="t" style="left:109px;top:965.5px;font-size:13.5px;color:#555">Drone_1.stp</div>
<svg class="abs" style="left:87px;top:963px" width="18" height="19" viewBox="0 0 18 19"><rect x="0.75" y="0.75" width="16.5" height="17.5" rx="2.5" fill="#fff" stroke="#222" stroke-width="1.3"/><rect x="0.75" y="6" width="16.5" height="7" fill="#222"/><text x="9" y="12" font-size="6.5" font-weight="bold" fill="#fff" text-anchor="middle" font-family="Liberation Sans">STEP</text></svg>
<div class="tab" style="left:278px;background:#e8e8e8"></div>
<div class="t" style="left:311px;top:965.5px;font-size:13.5px;color:#555;transform:scaleX(.97);transform-origin:0 0">Open CASCADE STEP tr...</div>
<svg class="abs" style="left:288px;top:962px" width="19" height="20" viewBox="0 0 19 20"><path d="M1 3.5 L4 1 H15 L18 4 V17 L15 19 H4 L1 16.5Z" fill="#fff" stroke="#222" stroke-width="1.2"/><path d="M4 4.5 H15 V16 H4Z" fill="#999" stroke="#444" stroke-width="1"/><path d="M1 3.5 L4 4.5 M15 4.5 L18 4 M4 16 L4 19" stroke="#222" stroke-width="1"/></svg>
<div class="tab" style="left:480px;background:#e8e8e8"></div>
<div class="t" style="left:513px;top:965.5px;font-size:13.5px;color:#555">Wing.step</div>
<svg class="abs" style="left:491px;top:963px" width="18" height="19" viewBox="0 0 18 19"><rect x="0.75" y="0.75" width="16.5" height="17.5" rx="2.5" fill="#fff" stroke="#222" stroke-width="1.3"/><rect x="0.75" y="6" width="16.5" height="7" fill="#222"/><text x="9" y="12" font-size="6.5" font-weight="bold" fill="#fff" text-anchor="middle" font-family="Liberation Sans">STEP</text></svg>
<div class="tab" style="left:682px;background:#fff"></div>
<div class="abs" style="left:682px;top:984px;width:200px;height:2px;background:#1d5eb0;border-radius:0 0 2px 2px"></div>
<div class="t" style="left:715px;top:965.5px;font-size:13.5px;color:#333">DroneParts</div>
<svg class="abs" style="left:692px;top:962px" width="20" height="20" viewBox="0 0 20 20"><path d="M1 7 L4 5.5 H7 V19 H4 L1 17.5Z" fill="#fff" stroke="#222" stroke-width="1.2"/><path d="M9 3 L12 1 H16 L19 2.5 V18 L16 19.5 H12 L9 18Z" fill="#fff" stroke="#222" stroke-width="1.2"/><path d="M12 1 V19.5 M4 5.5 V19" stroke="#222" stroke-width="1"/></svg>

</body></html>
